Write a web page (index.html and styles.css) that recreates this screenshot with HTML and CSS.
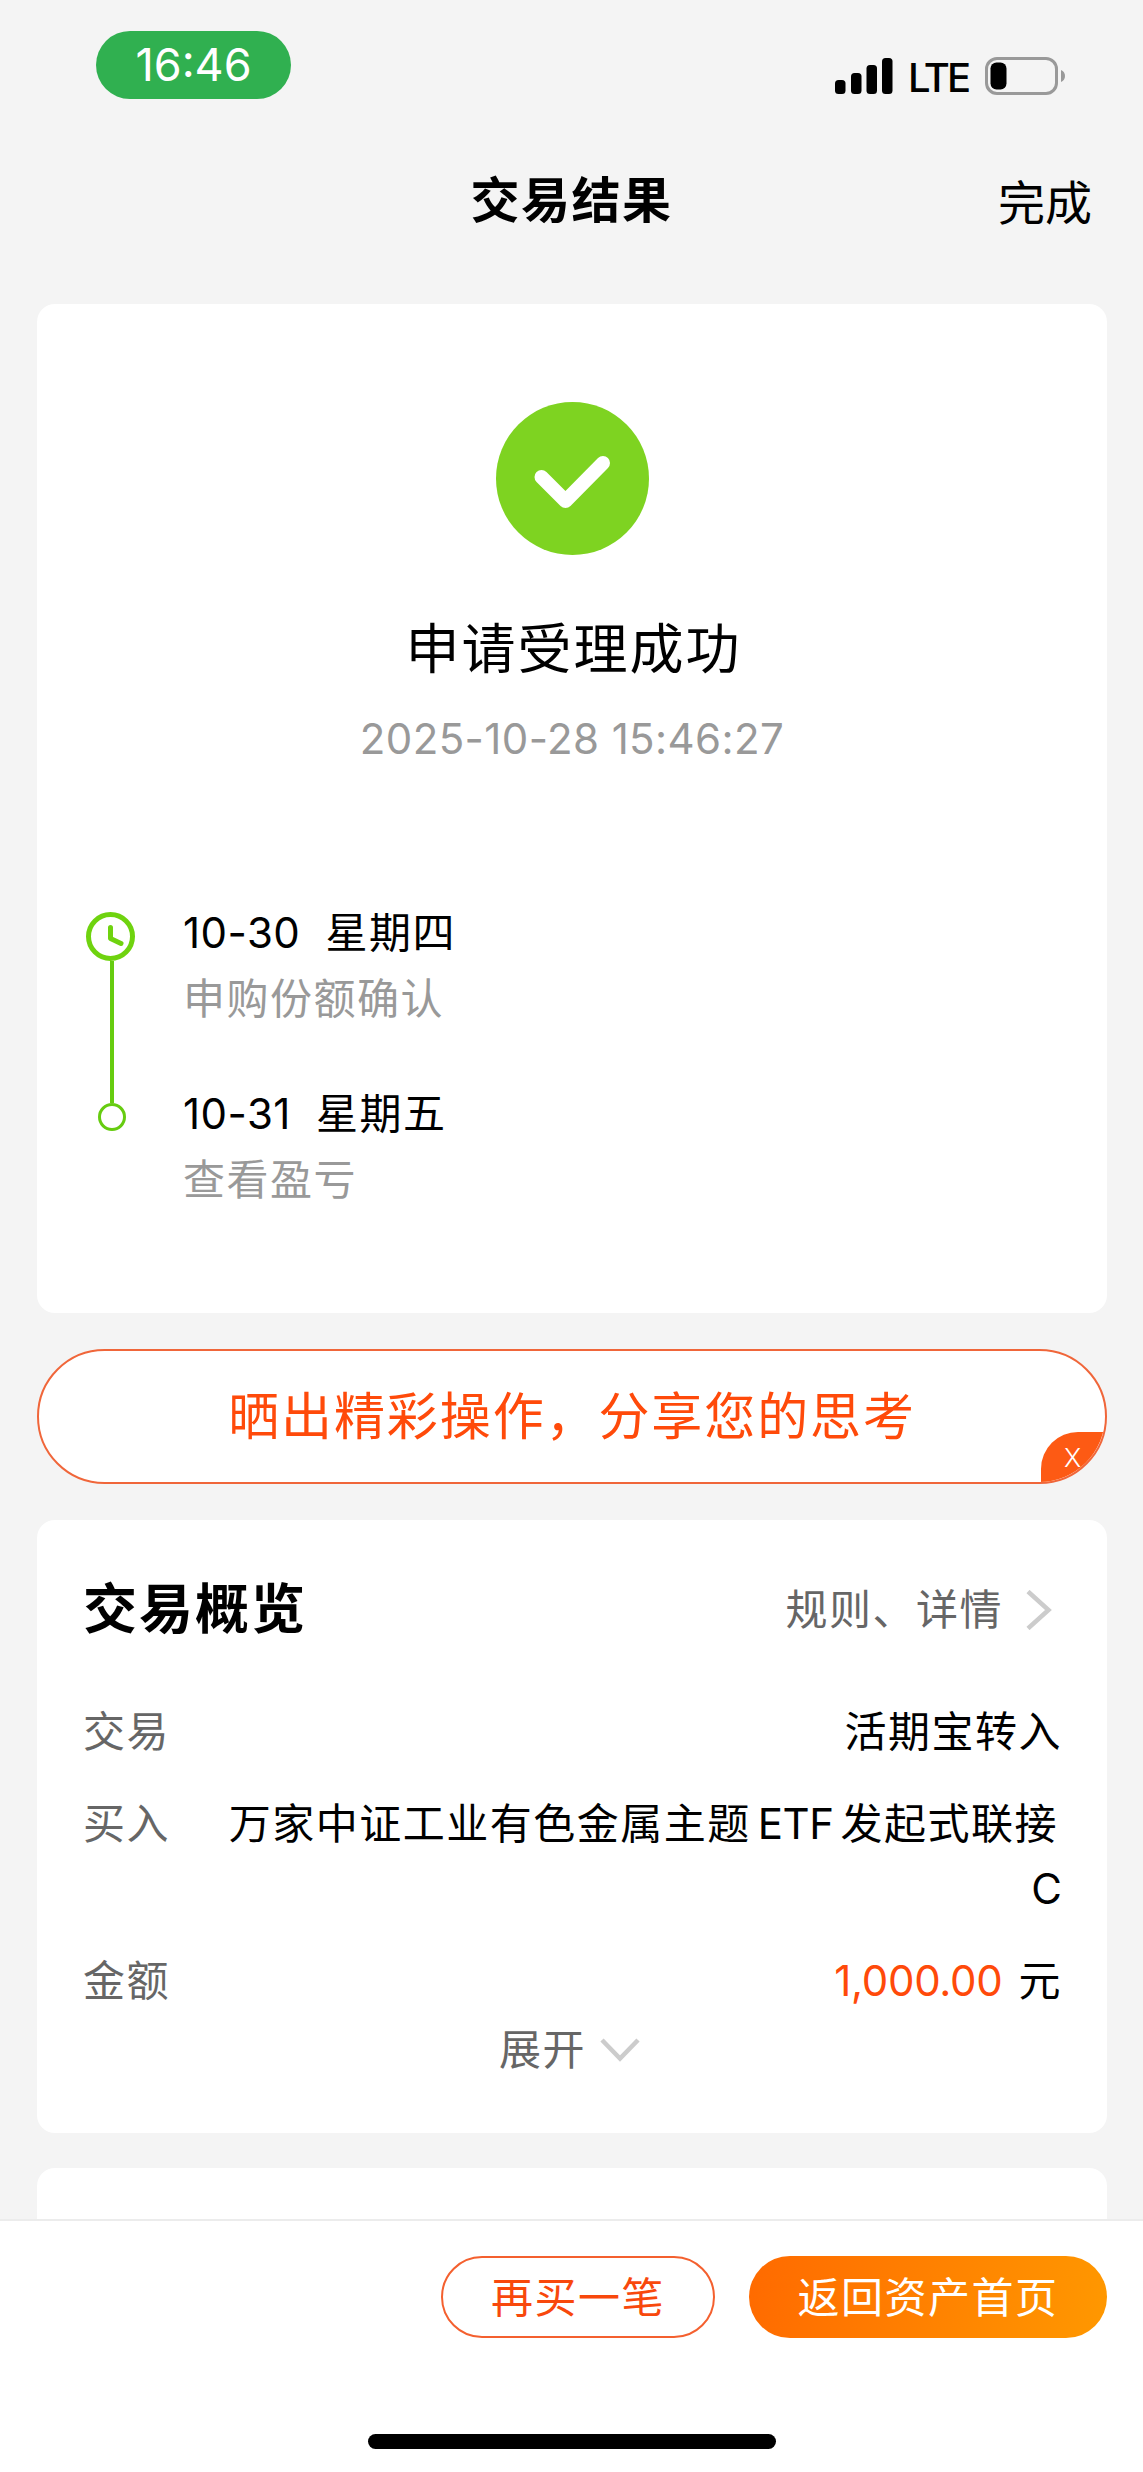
FILE: index.html
```html
<!DOCTYPE html>
<html lang="zh-CN">
<head>
  <meta charset="UTF-8" />
  <meta name="viewport" content="width=device-width, initial-scale=1.0"/>
  <title>交易结果</title>
  <link rel="stylesheet" href="styles.css">
</head>
<body>

  <div class="status-bar">
    <span class="time">16:46</span>
    <div class="status-right">
      <svg class="signal" width="58" height="36" viewBox="0 0 58 36">
        <rect x="0" y="22" width="10.5" height="14" rx="3.5"/>
        <rect x="16" y="15" width="10.5" height="21" rx="3.5"/>
        <rect x="31.5" y="7" width="10.5" height="29" rx="3.5"/>
        <rect x="47" y="0" width="10.5" height="36" rx="3.5"/>
      </svg>
      <span class="network">LTE</span>
      <svg class="battery" width="80" height="38" viewBox="0 0 80 38">
        <rect x="1.5" y="1.5" width="70" height="35" rx="10.5" fill="none" stroke="#999" stroke-width="3"/>
        <rect x="5.5" y="5.5" width="16" height="27" rx="6"/>
        <path d="M76 13c2.500 1 4 3.200 4 6s-1.500 5-4 6z" fill="#999"/>
      </svg>
    </div>
  </div>

  <header class="nav">
    <h1>交易结果</h1>
    <a class="done">完成</a>
  </header>

  <main>
    <section class="card result">
      <svg class="check" width="153" height="153" viewBox="0 0 153 153">
        <circle cx="76.500" cy="76.500" r="76.500" fill="#7ed321"/>
        <path d="M45.500 75l24 24 37.500-38" fill="none" stroke="#fff" stroke-width="14" stroke-linecap="round" stroke-linejoin="round"/>
      </svg>
      <h2>申请受理成功</h2>
      <p class="datetime">2025-10-28 15:46:27</p>

      <div class="timeline">
        <div class="track">
          <svg width="49" height="49" viewBox="0 0 49 49" fill="none" stroke="#6fd30f" stroke-width="5">
            <circle cx="24.500" cy="24.500" r="22"/>
            <path d="M24.500 15.500v11l10.500 5" stroke-linecap="round" stroke-linejoin="round"/>
          </svg>
          <span class="line"></span>
          <span class="dot"></span>
        </div>
        <div class="steps">
          <div class="step">
            <p class="day"><span>10-30</span>星期四</p>
            <p class="desc">申购份额确认</p>
          </div>
          <div class="step">
            <p class="day"><span>10-31</span>星期五</p>
            <p class="desc">查看盈亏</p>
          </div>
        </div>
      </div>
    </section>

    <div class="share">
      <span>晒出精彩操作，分享您的思考</span>
      <span class="share-close">X</span>
    </div>

    <section class="card overview">
      <div class="overview-head">
        <h3>交易概览</h3>
        <a class="more">规则、详情
          <svg width="26" height="40" viewBox="0 0 26 40" fill="none" stroke="#ccc" stroke-width="4.500"><path d="M2 1.500l20.500 18.500-20.500 18.500"/></svg>
        </a>
      </div>
      <div class="row">
        <span class="label">交易</span>
        <span class="value">活期宝转入</span>
      </div>
      <div class="row">
        <span class="label">买入</span>
        <span class="value"><span class="fund">万家中证工业有色金属主题<span class="latin">ETF</span>发起式联接</span> <span class="share-class">C</span></span>
      </div>
      <div class="row">
        <span class="label">金额</span>
        <span class="value"><span class="amount">1,000.00</span>元</span>
      </div>
      <div class="expand">展开
        <svg width="40" height="24" viewBox="0 0 40 24" fill="none" stroke="#ccc" stroke-width="4.500"><path d="M2 2l18 18.500 18-18.500"/></svg>
      </div>
    </section>

    <section class="card next"></section>
  </main>

  <footer class="bottom-bar">
    <div class="actions">
      <button type="button" class="btn btn-outline">再买一笔</button>
      <button type="button" class="btn btn-primary">返回资产首页</button>
    </div>
    <div class="home-indicator"></div>
  </footer>

</body>
</html>
```
FILE: styles.css
```css
* {
  box-sizing: border-box;
}
body {
  margin: 0;
  width: 1143px;
  height: 2472px;
  overflow: hidden;
  display: flex;
  flex-direction: column;
  background-color: #f4f4f4;
  color: #000;
  font-family: Inter, "Noto Sans CJK SC", sans-serif;
  font-size: 42px;
  line-height: 65px;
  letter-spacing: 1.5px;
}
h1, h2, h3, p {
  margin: 0;
}
svg {
  display: block;
  flex: none;
}

/* Status bar */
.status-bar {
  height: 148px;
  padding: 31px 78px 0 96px;
  display: flex;
  justify-content: space-between;
  align-items: flex-start;
}
.time {
  width: 195px;
  height: 68px;
  line-height: 68px;
  border-radius: 34px;
  background-color: #30b050;
  color: #fff;
  font-size: 45px;
  letter-spacing: 0;
  text-align: center;
}
.status-right {
  display: flex;
  align-items: center;
  margin-top: 26px;
  height: 38px;
}
.network {
  width: 60px;
  margin: 2px 17px 0 15px;
  font-size: 40px;
  font-weight: 500;
  letter-spacing: -3px;
}

/* Title bar */
.nav {
  height: 156px;
  padding: 18px 51px 0;
  display: grid;
  grid-template-columns: 1fr auto 1fr;
  align-items: start;
}
.nav h1 {
  grid-column: 2;
  margin-top: 2px;
  font-size: 49px;
  font-weight: 700;
  letter-spacing: 1.5px;
}
.done {
  margin-top: 4px;
  font-size: 47px;
  letter-spacing: 0;
  text-align: right;
}

main {
  flex: 1;
  min-height: 0;
  overflow: hidden;
  padding: 0 36px 0 37px;
}
.card {
  background-color: #fff;
  border-radius: 18px;
}

/* Result */
.result {
  height: 1009px;
  padding-top: 98px;
}
.check {
  margin: 0 auto;
}
.result h2 {
  margin-top: 62px;
  padding-left: 3px;
  font-size: 54px;
  font-weight: 400;
  letter-spacing: 2px;
  text-align: center;
}
.datetime {
  margin-top: 24px;
  color: #999;
  letter-spacing: 0.4px;
  text-align: center;
}
.timeline {
  display: flex;
  margin-top: 129px;
  padding-left: 48px;
}
.track {
  width: 50px;
  padding-top: 12px;
  display: flex;
  flex-direction: column;
  align-items: center;
}
.line {
  width: 4px;
  height: 142px;
  margin-left: 3px;
  background-color: #66cc10;
}
.dot {
  width: 28px;
  height: 28px;
  margin-left: 3px;
  border: 3px solid #66cc10;
  border-radius: 50%;
}
.steps {
  padding-left: 48px;
}
.step {
  height: 181px;
}
.day span {
  display: inline-block;
  margin-right: 25px;
  letter-spacing: 0.5px;
}
.desc {
  padding-top: 1px;
  color: #999;
}

/* Share banner */
.share {
  position: relative;
  height: 135px;
  margin: 36px 0;
  overflow: hidden;
  border: 2px solid #f0663a;
  border-radius: 68px;
  background-color: #fff;
  color: #ff4a0a;
  font-size: 51px;
  line-height: 131px;
  letter-spacing: 1.9px;
  text-align: center;
}
.share-close {
  position: absolute;
  right: -2px;
  bottom: -2px;
  width: 66px;
  height: 52px;
  border-top-left-radius: 37px;
  background-color: #fd5a14;
  color: #fff;
  font-size: 26px;
  font-weight: 300;
  line-height: 52px;
  letter-spacing: 0;
  padding-right: 3px;
}

/* Overview */
.overview {
  height: 613px;
  padding: 57px 46px 0 46px;
}
.overview-head {
  display: flex;
  justify-content: space-between;
  align-items: center;
  margin-bottom: 57px;
}
.overview-head h3 {
  font-size: 54px;
  font-weight: 700;
  letter-spacing: 2px;
}
.more {
  display: flex;
  align-items: center;
  gap: 23px;
  padding-right: 9px;
  color: #666;
}
.row {
  display: flex;
  justify-content: space-between;
  margin-bottom: 27px;
}
.label {
  flex: none;
  color: #666;
}
.value {
  max-width: 840px;
  margin-right: -1px;
  text-align: right;
}
.fund {
  padding-right: 4px;
}
.latin {
  margin: 0 7px;
  letter-spacing: -0.5px;
}
.share-class {
  letter-spacing: 0;
}
.amount {
  margin-right: 16px;
  color: #ff4a0a;
  letter-spacing: -0.3px;
}
.expand {
  display: flex;
  justify-content: center;
  align-items: center;
  gap: 14px;
  margin-top: -23px;
  padding-right: 5px;
  color: #666;
}
.next {
  height: 300px;
  margin-top: 35px;
}

/* Bottom bar */
.bottom-bar {
  flex: none;
  height: 253px;
  padding: 35px 36px 0;
  border-top: 2px solid #ececec;
  background-color: #fff;
}
.actions {
  display: flex;
  justify-content: flex-end;
  gap: 34px;
}
.btn {
  height: 82px;
  padding: 0;
  border: none;
  border-radius: 41px;
  font: inherit;
  letter-spacing: 1.5px;
}
.btn-outline {
  width: 274px;
  border: 2px solid #f4602f;
  background-color: #fff;
  color: #f8480c;
}
.btn-primary {
  width: 358px;
  background: linear-gradient(100deg, #ff6a00, #ff9800);
  color: #fff;
}
.home-indicator {
  width: 408px;
  height: 15px;
  margin: 96px auto 0;
  border-radius: 8px;
  background-color: #000;
}
```
